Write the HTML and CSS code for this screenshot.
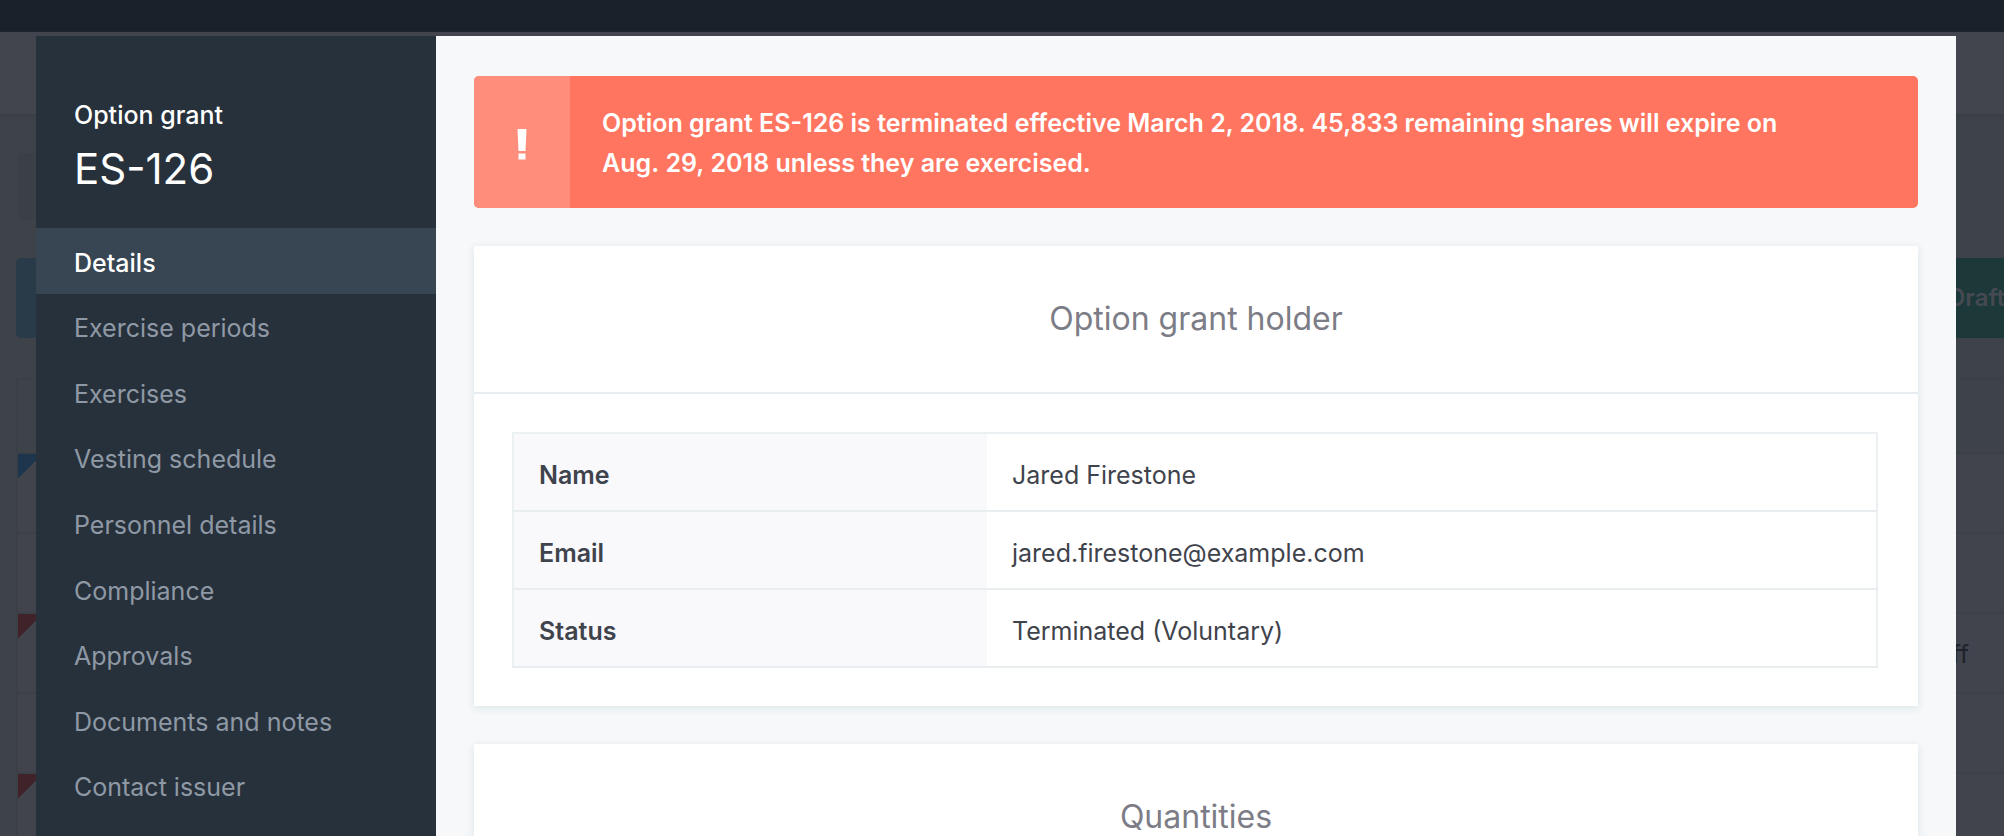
FILE: index.html
```html
<!DOCTYPE html>
<html lang="en">
<head>
    <meta charset="UTF-8">
    <meta name="viewport" content="width=device-width, initial-scale=1.0">
    <title>Option grant ES-126</title>
    <link rel="stylesheet" href="styles.css">
</head>
<body>
    <!-- Page behind the modal -->
    <div class="page" aria-hidden="true">
        <div class="page-topbar"></div>
        <div class="page-header"></div>
        <div class="page-filters">
            <div class="filter-box"></div>
        </div>
        <div class="page-toolbar">
            <div class="toolbar-primary"></div>
            <div class="toolbar-draft">Draft</div>
        </div>
        <div class="grants">
            <div class="grants-head"></div>
            <div class="grants-row flag-blue"></div>
            <div class="grants-row"></div>
            <div class="grants-row flag-red">ff</div>
            <div class="grants-row"></div>
            <div class="grants-row flag-red"></div>
        </div>
    </div>

    <!-- Option grant modal -->
    <div class="modal" role="dialog" aria-labelledby="modal-title">
        <aside class="sidebar">
            <p class="sidebar-label">Option grant</p>
            <h1 id="modal-title">ES-126</h1>
            <nav>
                <ul class="menu">
                    <li><a class="active" href="#details">Details</a></li>
                    <li><a href="#exercise-periods">Exercise periods</a></li>
                    <li><a href="#exercises">Exercises</a></li>
                    <li><a href="#vesting">Vesting schedule</a></li>
                    <li><a href="#personnel">Personnel details</a></li>
                    <li><a href="#compliance">Compliance</a></li>
                    <li><a href="#approvals">Approvals</a></li>
                    <li><a href="#documents">Documents and notes</a></li>
                    <li><a href="#contact">Contact issuer</a></li>
                </ul>
            </nav>
        </aside>

        <main class="content" id="details">
            <div class="alert" role="alert">
                <div class="alert-icon">
                    <svg width="10" height="36" viewBox="0 0 10 36" fill="#fff">
                        <path d="M0.5 5h9L8.5 27h-7z"/>
                        <path d="M1.500 29.500h7v6h-7z"/>
                    </svg>
                </div>
                <p>Option grant ES-126 is terminated effective March 2, 2018. 45,833 remaining shares will expire on Aug.&nbsp;29,&nbsp;2018 unless they are exercised.</p>
            </div>

            <section class="card">
                <h2>Option grant holder</h2>
                <div class="card-body">
                    <table class="info">
                        <tr>
                            <th scope="row">Name</th>
                            <td>Jared Firestone</td>
                        </tr>
                        <tr>
                            <th scope="row">Email</th>
                            <td>jared.firestone@example.com</td>
                        </tr>
                        <tr>
                            <th scope="row">Status</th>
                            <td>Terminated (Voluntary)</td>
                        </tr>
                    </table>
                </div>
            </section>

            <section class="card">
                <h2>Quantities</h2>
            </section>
        </main>
    </div>
</body>
</html>
```
FILE: styles.css
```css
* {
    box-sizing: border-box;
}
body {
    margin: 0;
    height: 100vh;
    overflow: hidden;
    font-family: Inter, "Liberation Sans", sans-serif;
    font-size: 25px;
    color: #3f434c;
    background-color: #3e4249;
}
h1, h2, p, ul {
    margin: 0;
    padding: 0;
}

/* Page behind the modal */
.page-topbar {
    height: 32px;
    background-color: #1a212a;
}
.page-header {
    height: 83px;
    background-color: #42454d;
    border-bottom: 1px solid #3a3e45;
    box-shadow: 0 1px 3px #393d44;
}
.page-filters {
    padding: 38px 50px 38px 18px;
}
.filter-box {
    height: 67px;
    border-radius: 5px;
    background-color: #3b3f46;
}
.page-toolbar {
    display: flex;
    justify-content: space-between;
    padding-left: 16px;
    margin-bottom: 40px;
}
.toolbar-primary {
    width: 240px;
    height: 80px;
    border-radius: 5px;
    background-color: #293a49;
}
.toolbar-draft {
    width: 92px;
    padding-left: 36px;
    font-size: 24px;
    line-height: 80px;
    font-weight: 600;
    color: #454951;
    background-color: #1c3838;
}
.grants {
    margin-left: 16px;
    border-left: 2px solid #3b3f46;
    border-top: 2px solid #3b3f46;
}
.grants-head {
    height: 74px;
    border-bottom: 2px solid #3b3f46;
}
.grants-row {
    height: 80px;
    padding-right: 35px;
    border-bottom: 2px solid #3c4047;
    line-height: 80px;
    text-align: right;
    color: #1e222b;
    background-color: #41444c;
}
.flag-blue {
    background-image: linear-gradient(135deg, #1d354d 17px, transparent 17px);
}
.flag-red {
    background-image: linear-gradient(135deg, #40222a 17px, transparent 17px);
}

/* Modal */
.modal {
    position: fixed;
    top: 36px;
    right: 48px;
    bottom: 0;
    left: 36px;
    display: flex;
    overflow: hidden;
    background-color: #f6f8fa;
}
.sidebar {
    flex: 0 0 400px;
    padding-top: 60px;
    background-color: #27313c;
    color: #fff;
}
.sidebar-label {
    padding: 0 38px;
    line-height: 38px;
    font-weight: 500;
}
.sidebar h1 {
    padding: 0 38px;
    margin-bottom: 24px;
    font-size: 42px;
    font-weight: 400;
    line-height: 70px;
}
.menu {
    display: grid;
    grid-auto-rows: 1fr;
    min-height: 590px;
    list-style: none;
}
.menu a {
    display: flex;
    align-items: center;
    height: 100%;
    padding: 4px 38px 0;
    color: #8f99a5;
    text-decoration: none;
}
.menu .active {
    color: #fff;
    font-weight: 500;
    background-color: #384552;
}
.content {
    flex: 1;
    padding: 40px 38px;
}
.alert {
    display: flex;
    margin-bottom: 38px;
    border-radius: 5px;
    overflow: hidden;
    color: #fff;
    background-color: #ff755f;
}
.alert-icon {
    flex: 0 0 96px;
    display: flex;
    align-items: center;
    justify-content: center;
    background-color: #ff8d7b;
}
.alert p {
    padding: 27px 32px 25px;
    font-weight: 600;
    line-height: 40px;
}
.card {
    margin-bottom: 38px;
    background-color: #fff;
    box-shadow: 0 2px 8px rgba(40, 90, 100, 0.12);
}
.card h2 {
    padding: 38px;
    border-bottom: 2px solid #e8edf1;
    font-size: 32px;
    font-weight: 400;
    line-height: 70px;
    text-align: center;
    color: #7c7d86;
}
.card-body {
    padding: 38px 40px 38px 38px;
}
.info {
    width: 100%;
    border-collapse: collapse;
    border: 2px solid #ebf0f3;
}
.info th,
.info td {
    height: 78px;
    padding: 6px 25px 0;
    border-bottom: 2px solid #e8edf0;
    text-align: left;
}
.info th {
    width: 474px;
    font-weight: 600;
    background-color: #f9f9fc;
}
```
